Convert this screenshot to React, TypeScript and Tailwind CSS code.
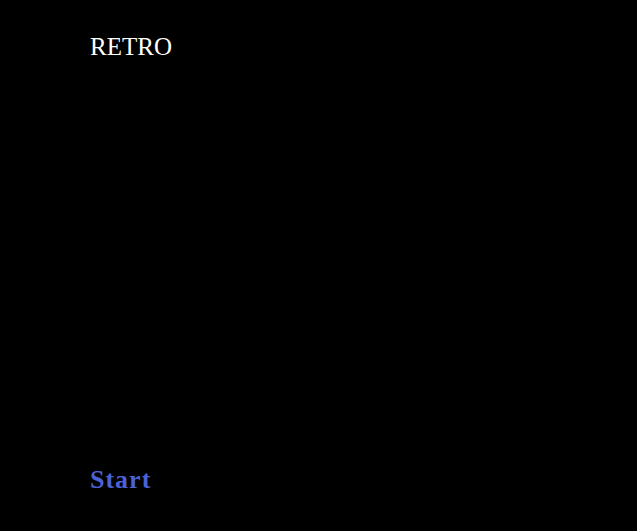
export default function App() {
  return (
    <div className="bg-black min-h-screen h-[531px] flex flex-col justify-between px-[90px] pt-[33px] pb-[36px] font-['Liberation_Serif',serif]">
      <h1 className="text-white text-[25px] leading-[28px]">RETRO</h1>
      <button className="self-start text-[#4b62d6] text-[26px] leading-[30px] font-bold tracking-[1px]">Start</button>
    </div>
  )
}
